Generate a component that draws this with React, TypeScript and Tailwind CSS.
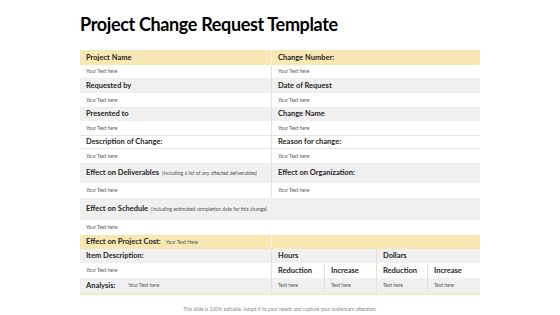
const sans = { fontFamily: "Lato, 'Open Sans', sans-serif" };

function Label({ children }: { children: React.ReactNode }) {
  return <span className="text-[7.5px] font-bold leading-none text-[#1f1f1f]">{children}</span>;
}

function Small({ children }: { children: React.ReactNode }) {
  return <span className="text-[5px] leading-none text-[#555]">{children}</span>;
}

function TwoCol({
  h,
  bg,
  left,
  right,
  line = "border-[#e2e2e2]",
}: {
  h: string;
  bg: string;
  left: React.ReactNode;
  right: React.ReactNode;
  line?: string;
}) {
  return (
    <div className={`flex ${h} ${bg}`}>
      <div className="flex w-[191px] items-center pl-[6px]">{left}</div>
      <div className={`flex flex-1 items-center border-l pl-[6px] ${line}`}>{right}</div>
    </div>
  );
}

function Mixed({ label, note }: { label: string; note: string }) {
  return (
    <span className="flex items-baseline gap-[3px] whitespace-nowrap leading-none">
      <Label>{label}</Label>
      <Small>{note}</Small>
    </span>
  );
}

export default function App() {
  return (
    <div className="h-[315px] w-[560px] bg-white" style={sans}>
      <h1 className="pl-[80px] pt-[13px] text-[18px] font-bold leading-[22px] tracking-[-0.35px] text-black">
        Project Change Request Template
      </h1>

      <div className="ml-[80px] mt-[15px] w-[400px] text-[7px] leading-none">
        <TwoCol h="h-[15px]" bg="bg-[#f7e8b3]" line="border-[#fbf4dc]" left={<Label>Project Name</Label>} right={<Label>Change Number:</Label>} />
        <TwoCol h="h-[13px]" bg="bg-white" left={<Small>Your Text here</Small>} right={<Small>Your Text here</Small>} />
        <TwoCol h="h-[15px]" bg="bg-[#f0f0f0]" left={<Label>Requested by</Label>} right={<Label>Date of Request</Label>} />
        <TwoCol h="h-[14px]" bg="bg-white" left={<Small>Your Text here</Small>} right={<Small>Your Text here</Small>} />
        <TwoCol h="h-[14px]" bg="bg-[#f0f0f0]" left={<Label>Presented to</Label>} right={<Label>Change Name</Label>} />
        <TwoCol h="h-[14px]" bg="bg-white" left={<Small>Your Text here</Small>} right={<Small>Your Text here</Small>} />
        <div className="border-y border-[#e6e6e6]">
          <TwoCol h="h-[12px]" bg="bg-white" left={<Label>Description of Change:</Label>} right={<Label>Reason for change:</Label>} />
        </div>
        <TwoCol h="h-[14px]" bg="bg-white" left={<Small>Your Text here</Small>} right={<Small>Your Text here</Small>} />
        <TwoCol
          h="h-[20px]"
          bg="bg-[#f0f0f0]"
          left={<Mixed label="Effect on Deliverables" note="(including a list of any affected deliverables)" />}
          right={<Label>Effect on Organization:</Label>}
        />
        <TwoCol h="h-[15px]" bg="bg-white" left={<Small>Your Text here</Small>} right={<Small>Your Text here</Small>} />
        <div className="flex h-[22px] items-center bg-[#f0f0f0] pl-[6px]">
          <Mixed label="Effect on Schedule" note="(including estimated completion date for this change)" />
        </div>
        <div className="flex h-[15px] items-center pl-[6px]">
          <Small>Your Text here</Small>
        </div>

        <TwoCol
          h="h-[14px]"
          bg="bg-[#f7e8b3]"
          line="border-[#fbf4dc]"
          left={
            <span className="flex items-baseline gap-[5px] whitespace-nowrap leading-none">
              <Label>Effect on Project Cost:</Label>
              <Small>Your Text Here</Small>
            </span>
          }
          right={null}
        />

        <div className="flex h-[14px] bg-[#f0f0f0]">
          <div className="flex w-[191px] items-center pl-[6px]">
            <Label>Item Description:</Label>
          </div>
          <div className="flex w-[105px] items-center border-l border-[#e2e2e2] pl-[6px]">
            <Label>Hours</Label>
          </div>
          <div className="flex flex-1 items-center border-l border-[#e2e2e2] pl-[6px]">
            <Label>Dollars</Label>
          </div>
        </div>

        <div className="flex h-[15px] bg-white">
          <div className="flex w-[191px] items-center pl-[6px]">
            <Small>Your Text here</Small>
          </div>
          {["Reduction", "Increase", "Reduction", "Increase"].map((t, i) => (
            <div
              key={i}
              className={`flex items-center border-l border-[#e2e2e2] pl-[6px] ${i === 1 ? "w-[52px]" : i === 2 ? "w-[51px]" : "w-[53px]"}`}
            >
              <Label>{t}</Label>
            </div>
          ))}
        </div>

        <div className="flex h-[15px] bg-[#f0f0f0]">
          <div className="flex w-[191px] items-center pl-[6px]">
            <span className="flex w-[42px] items-center">
              <Label>Analysis:</Label>
            </span>
            <Small>Your Text here</Small>
          </div>
          {[0, 1, 2, 3].map((i) => (
            <div
              key={i}
              className={`flex items-center border-l border-[#e2e2e2] pl-[6px] ${i === 1 ? "w-[52px]" : i === 2 ? "w-[51px]" : "w-[53px]"}`}
            >
              <Small>Test here</Small>
            </div>
          ))}
        </div>
        <div className="h-[2px] bg-[#f3ebcc]" />
      </div>

      <p className="mt-[11px] text-center text-[5px] text-[#8a8a8a]">
        This slide is 100% editable. Adapt it to your needs and capture your audience's attention.
      </p>
    </div>
  );
}
